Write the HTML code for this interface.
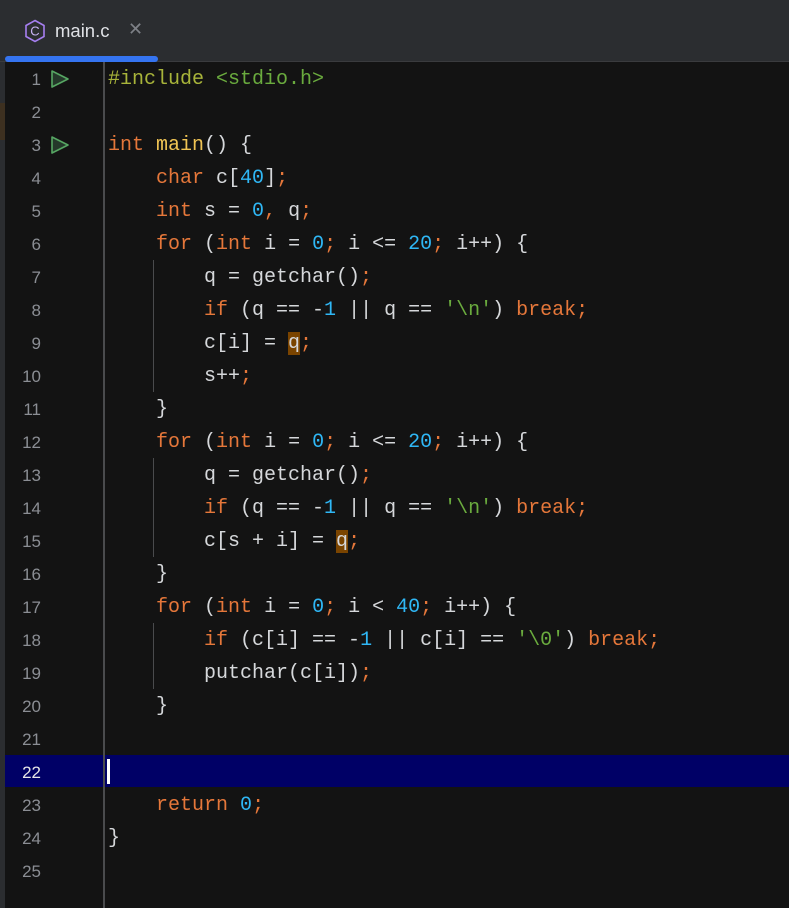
<!DOCTYPE html>
<html><head><style>
body{margin:0;width:789px;height:908px;background:#131313;overflow:hidden;position:relative;font-family:"Liberation Mono",monospace}
#tab{position:absolute;left:0;top:0;width:789px;height:62px;background:#2b2d30;border-bottom:1px solid #3a3b3e;box-sizing:border-box}
#blue{position:absolute;left:5px;top:56px;width:153px;height:6px;background:#3574f0;border-radius:3px}
#strip{position:absolute;left:0;top:62px;width:5px;height:846px;background:#2b2d30}
#brown{position:absolute;left:0;top:103px;width:5px;height:37px;background:#3d3020}
#border{position:absolute;left:103px;top:62px;width:2px;height:846px;background:#4a4b4d}
.ln{position:absolute;left:5px;width:36px;text-align:right;font:17px "Liberation Sans",sans-serif;color:#8b8e94;height:33px;line-height:33px}
.code{position:absolute;left:108px;font-size:20px;height:33px;line-height:33px;white-space:pre;color:#d6d8db}
.k{color:#e5773a}.n{color:#2fb7f5}.s{color:#6aab3e}.f{color:#f0c454}.p{color:#a8b43a}
.g{position:absolute;left:153px;width:1px;background:#4a4b4d}
.hl{background:#7a4400}
</style></head><body>
<div id="tab">
<svg style="position:absolute;left:24px;top:19px" width="22" height="24" viewBox="0 0 22 24"><polygon points="11,1.5 20,6.5 20,17.5 11,22.5 2,17.5 2,6.5" fill="none" stroke="#a67ff0" stroke-width="1.6"/><text x="11" y="16.5" text-anchor="middle" font-family="Liberation Sans" font-size="13" fill="#c9b3f5">C</text></svg>
<span style="position:absolute;left:55px;top:20px;font:18.5px 'Liberation Sans',sans-serif;color:#dfe1e5">main.c</span>
<span style="position:absolute;left:128px;top:19px;font:18px 'Liberation Sans',sans-serif;color:#7e8187">✕</span>
</div>
<div id="blue"></div>
<div id="strip"></div><div id="brown"></div>
<div style="position:absolute;left:5px;top:755px;width:784px;height:32px;background:#000066"></div>
<div style="position:absolute;left:107px;top:759px;width:3px;height:25px;background:#fff"></div>
<div id="border"></div>
<div class="g" style="top:260px;height:132px"></div>
<div class="g" style="top:458px;height:99px"></div>
<div class="g" style="top:623px;height:66px"></div>
<svg style="position:absolute;left:50px;top:69px" width="20" height="20"><polygon points="2,2 18,10 2,18" fill="#24382a" stroke="#56a663" stroke-width="1.6" stroke-linejoin="round"/></svg>
<svg style="position:absolute;left:50px;top:135px" width="20" height="20"><polygon points="2,2 18,10 2,18" fill="#24382a" stroke="#56a663" stroke-width="1.6" stroke-linejoin="round"/></svg>
<div id="lines"></div>
<script>
var L=[
'<span class="p">#include</span> <span class="s">&lt;stdio.h&gt;</span>',
'',
'<span class="k">int</span> <span class="f">main</span>() {',
'    <span class="k">char</span> c[<span class="n">40</span>]<span class="k">;</span>',
'    <span class="k">int</span> s = <span class="n">0</span><span class="k">,</span> q<span class="k">;</span>',
'    <span class="k">for</span> (<span class="k">int</span> i = <span class="n">0</span><span class="k">;</span> i &lt;= <span class="n">20</span><span class="k">;</span> i++) {',
'        q = getchar()<span class="k">;</span>',
'        <span class="k">if</span> (q == -<span class="n">1</span> || q == <span class="s">\'\\n\'</span>) <span class="k">break;</span>',
'        c[i] = <span class="hl">q</span><span class="k">;</span>',
'        s++<span class="k">;</span>',
'    }',
'    <span class="k">for</span> (<span class="k">int</span> i = <span class="n">0</span><span class="k">;</span> i &lt;= <span class="n">20</span><span class="k">;</span> i++) {',
'        q = getchar()<span class="k">;</span>',
'        <span class="k">if</span> (q == -<span class="n">1</span> || q == <span class="s">\'\\n\'</span>) <span class="k">break;</span>',
'        c[s + i] = <span class="hl">q</span><span class="k">;</span>',
'    }',
'    <span class="k">for</span> (<span class="k">int</span> i = <span class="n">0</span><span class="k">;</span> i &lt; <span class="n">40</span><span class="k">;</span> i++) {',
'        <span class="k">if</span> (c[i] == -<span class="n">1</span> || c[i] == <span class="s">\'\\0\'</span>) <span class="k">break;</span>',
'        putchar(c[i])<span class="k">;</span>',
'    }',
'',
'',
'    <span class="k">return</span> <span class="n">0</span><span class="k">;</span>',
'}',
''];
var h='';
for(var i=0;i<25;i++){var t=62+i*33;h+='<div class="ln" style="top:'+(t+1)+'px;'+(i==21?'color:#e6e6e6':'')+'">'+(i+1)+'</div><div class="code" style="top:'+(t+1)+'px">'+L[i]+'</div>';}
document.getElementById('lines').innerHTML=h;
</script>
</body></html>
